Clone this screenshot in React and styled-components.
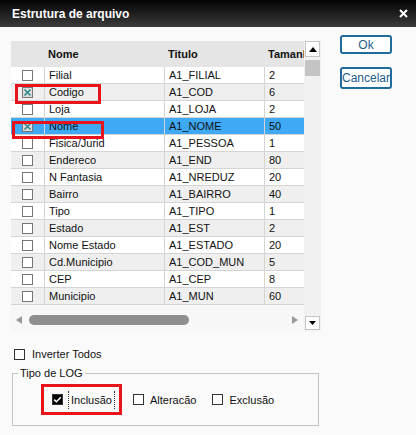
import styled, { createGlobalStyle } from 'styled-components';

const fields = [
  { nome: 'Filial', titulo: 'A1_FILIAL', tam: '2' },
  { nome: 'Codigo', titulo: 'A1_COD', tam: '6', checked: true, mark: { top: 0, left: 4, width: 86, height: 20 } },
  { nome: 'Loja', titulo: 'A1_LOJA', tam: '2' },
  { nome: 'Nome', titulo: 'A1_NOME', tam: '50', checked: true, selected: true, mark: { top: 3, left: 1, width: 92, height: 18 } },
  { nome: 'Fisica/Jurid', titulo: 'A1_PESSOA', tam: '1' },
  { nome: 'Endereco', titulo: 'A1_END', tam: '80' },
  { nome: 'N Fantasia', titulo: 'A1_NREDUZ', tam: '20' },
  { nome: 'Bairro', titulo: 'A1_BAIRRO', tam: '40' },
  { nome: 'Tipo', titulo: 'A1_TIPO', tam: '1' },
  { nome: 'Estado', titulo: 'A1_EST', tam: '2' },
  { nome: 'Nome Estado', titulo: 'A1_ESTADO', tam: '20' },
  { nome: 'Cd.Municipio', titulo: 'A1_COD_MUN', tam: '5' },
  { nome: 'CEP', titulo: 'A1_CEP', tam: '8' },
  { nome: 'Municipio', titulo: 'A1_MUN', tam: '60' },
];

const App = () => {
  return (
    <>
      <GlobalStyle />
      <Window>
        <TitleBar>
          <Title>Estrutura de arquivo</Title>
          <svg width="9" height="9" viewBox="0 0 9 9">
            <path d="M1 1 L8 8 M8 1 L1 8" stroke="#fff" strokeWidth="2" />
          </svg>
        </TitleBar>

        <Content>
          <TopRow>
            <GridPanel>
              <TableArea>
                <HeaderRow>
                  <Cell />
                  <HeadCell>Nome</HeadCell>
                  <HeadCell>Titulo</HeadCell>
                  <HeadCell>Tamanho</HeadCell>
                </HeaderRow>
                {fields.map((f, i) => (
                  <Row key={f.titulo} $alt={i % 2 === 1} $selected={f.selected}>
                    <BoxCell>
                      <GridCheck checked={f.checked} />
                    </BoxCell>
                    <Cell $line>{f.nome}</Cell>
                    <Cell $line>{f.titulo}</Cell>
                    <Cell $line>{f.tam}</Cell>
                    {f.mark && (
                      <Highlight
                        style={{
                          top: f.mark.top,
                          left: f.mark.left,
                          width: f.mark.width,
                          height: f.mark.height,
                        }}
                      />
                    )}
                  </Row>
                ))}
                <HScroll>
                  <svg width="6" height="8" viewBox="0 0 6 8">
                    <path d="M6 0 L0 4 L6 8 Z" fill="#9a9a9a" />
                  </svg>
                  <HThumb />
                  <svg width="6" height="8" viewBox="0 0 6 8">
                    <path d="M0 0 L6 4 L0 8 Z" fill="#9a9a9a" />
                  </svg>
                </HScroll>
              </TableArea>

              <VScroll>
                <ArrowButton $height={16}>
                  <svg width="8" height="5" viewBox="0 0 8 5">
                    <path d="M0 5 L4 0 L8 5 Z" fill="#000" />
                  </svg>
                </ArrowButton>
                <VThumb />
                <ArrowButton $height={14}>
                  <svg width="7" height="4" viewBox="0 0 7 4">
                    <path d="M0 0 L7 0 L3.5 4 Z" fill="#000" />
                  </svg>
                </ArrowButton>
              </VScroll>
            </GridPanel>

            <ButtonCol>
              <DialogButton $height={19}>Ok</DialogButton>
              <DialogButton $height={22}>Cancelar</DialogButton>
            </ButtonCol>
          </TopRow>

          <InvertRow>
            <PlainCheck />
            <span>Inverter Todos</span>
          </InvertRow>

          <GroupBox>
            <Legend>Tipo de LOG</Legend>
            <Options>
              <MarkedOption>
                <PlainCheck checked />
                <FocusText>Inclusão</FocusText>
              </MarkedOption>
              <Option $offset={11}>
                <PlainCheck />
                <span>Alteracão</span>
              </Option>
              <Option $offset={16}>
                <PlainCheck />
                <span>Exclusão</span>
              </Option>
            </Options>
          </GroupBox>
        </Content>
      </Window>
    </>
  );
};

const GridCheck = ({ checked }) => (
  <svg width="11" height="11" viewBox="0 0 11 11">
    <rect x="0.5" y="0.5" width="10" height="10" fill={checked ? '#dcdcdc' : '#fff'} stroke="#767676" />
    {checked && <path d="M2.5 2.5 L8.5 8.5 M8.5 2.5 L2.5 8.5" stroke="#2f8a8a" strokeWidth="1.6" />}
  </svg>
);

const PlainCheck = ({ checked }) => (
  <svg width="11" height="11" viewBox="0 0 11 11">
    <rect x="0.5" y="0.5" width="10" height="10" fill={checked ? '#000' : '#fff'} stroke="#333" />
    {checked && <path d="M2.2 5.6 L4.4 7.8 L8.8 3.2" stroke="#fff" strokeWidth="1.5" fill="none" />}
  </svg>
);

const GlobalStyle = createGlobalStyle`
  html, body {
    margin: 0;
    padding: 0;
    background: #fafafa;
    overflow: hidden;
  }
  body {
    font-family: "Liberation Sans", Arial, sans-serif;
    font-size: 11px;
    color: #111;
  }
`;

const Window = styled.div`
  width: 416px;
  height: 435px;
  background: #fafafa;
  display: flex;
  flex-direction: column;
`;

const TitleBar = styled.div`
  height: 27px;
  flex-shrink: 0;
  background: linear-gradient(#030303, #3b3b3b);
  display: flex;
  align-items: center;
  justify-content: space-between;
  padding: 0 8px 0 12px;
  box-sizing: border-box;
`;

const Title = styled.span`
  color: #fff;
  font-weight: bold;
  font-size: 12px;
`;

const Content = styled.div`
  padding: 8px 0 0 11px;
  display: flex;
  flex-direction: column;
`;

const TopRow = styled.div`
  display: flex;
  align-items: flex-start;
`;

const GridPanel = styled.div`
  margin-top: 6px;
  width: 310px;
  height: 290px;
  display: flex;
  background: #f7f7f7;
`;

const TableArea = styled.div`
  width: 293px;
  overflow: hidden;
  display: flex;
  flex-direction: column;
`;

const columns = '33px 120px 100px 60px';

const HeaderRow = styled.div`
  display: grid;
  grid-template-columns: ${columns};
  height: 26px;
  flex-shrink: 0;
  background: #e5e5e5;
  align-items: center;
`;

const Row = styled.div`
  position: relative;
  display: grid;
  grid-template-columns: ${columns};
  height: 17px;
  flex-shrink: 0;
  box-sizing: border-box;
  border-bottom: 1px solid #d4d4d4;
  background: ${(p) => (p.$selected ? '#3fa9f5' : p.$alt ? '#efefef' : '#fff')};
`;

const Cell = styled.div`
  padding-left: 4px;
  white-space: nowrap;
  overflow: hidden;
  display: flex;
  align-items: center;
  box-sizing: border-box;
  border-left: ${(p) => (p.$line ? '1px solid #d4d4d4' : 'none')};
`;

const HeadCell = styled(Cell)`
  font-weight: bold;
  padding-left: 4px;
`;

const BoxCell = styled.div`
  display: flex;
  align-items: center;
  justify-content: center;
`;

const Highlight = styled.div`
  position: absolute;
  z-index: 2;
  box-sizing: border-box;
  border: 3px solid #e8141b;
  pointer-events: none;
`;

const HScroll = styled.div`
  flex: 1;
  display: flex;
  align-items: center;
  padding: 4px 6px 0 5px;
  box-sizing: border-box;
  svg {
    flex-shrink: 0;
  }
`;

const HThumb = styled.div`
  width: 160px;
  height: 10px;
  border-radius: 5px;
  background: #8f8f8f;
  margin-left: 7px;
  margin-right: auto;
`;

const VScroll = styled.div`
  width: 17px;
  display: flex;
  flex-direction: column;
  align-items: flex-start;
  background: #f1f1f1;
  padding-left: 1px;
  box-sizing: border-box;
`;

const ArrowButton = styled.div`
  width: 15px;
  height: ${(p) => p.$height}px;
  box-sizing: border-box;
  border: 1px solid #c4c4c4;
  background: #fff;
  display: flex;
  align-items: center;
  justify-content: center;
  &:last-child {
    margin-top: auto;
    margin-bottom: 1px;
  }
`;

const VThumb = styled.div`
  width: 15px;
  height: 16px;
  margin-top: 3px;
  background: #c4c4c4;
`;

const ButtonCol = styled.div`
  margin-left: 19px;
  display: flex;
  flex-direction: column;
  gap: 13px;
`;

const DialogButton = styled.button`
  width: 52px;
  height: ${(p) => p.$height}px;
  box-sizing: border-box;
  border: 2px solid #1f6b9c;
  border-radius: 3px;
  background: #fff;
  color: #1d5c8c;
  font-family: "Liberation Sans", Arial, sans-serif;
  font-size: 12px;
  padding: 0;
  display: flex;
  align-items: center;
  justify-content: center;
`;

const InvertRow = styled.div`
  margin-top: 16px;
  margin-left: 3px;
  height: 14px;
  display: flex;
  align-items: center;
  gap: 7px;
`;

const GroupBox = styled.fieldset`
  margin: 5px 0 0 1px;
  width: 307px;
  box-sizing: border-box;
  border: 1px solid #c3c3c3;
  padding: 0 0 10px 0;
  min-width: 0;
`;

const Legend = styled.legend`
  margin-left: 5px;
  padding: 0 2px;
  line-height: 14px;
  font-size: 11px;
`;

const Options = styled.div`
  margin-top: 4px;
  display: flex;
  align-items: center;
`;

const MarkedOption = styled.div`
  margin-left: 28px;
  width: 81px;
  height: 31px;
  box-sizing: border-box;
  border: 3px solid #e8141b;
  display: flex;
  align-items: center;
  padding-left: 8px;
  gap: 5px;
`;

const FocusText = styled.span`
  height: 18px;
  display: flex;
  align-items: center;
  padding: 0 2px;
  border-left: 1px dotted #333;
  border-right: 1px dotted #333;
`;

const Option = styled.div`
  margin-left: ${(p) => p.$offset}px;
  display: flex;
  align-items: center;
  gap: 6px;
`;

export default App;
